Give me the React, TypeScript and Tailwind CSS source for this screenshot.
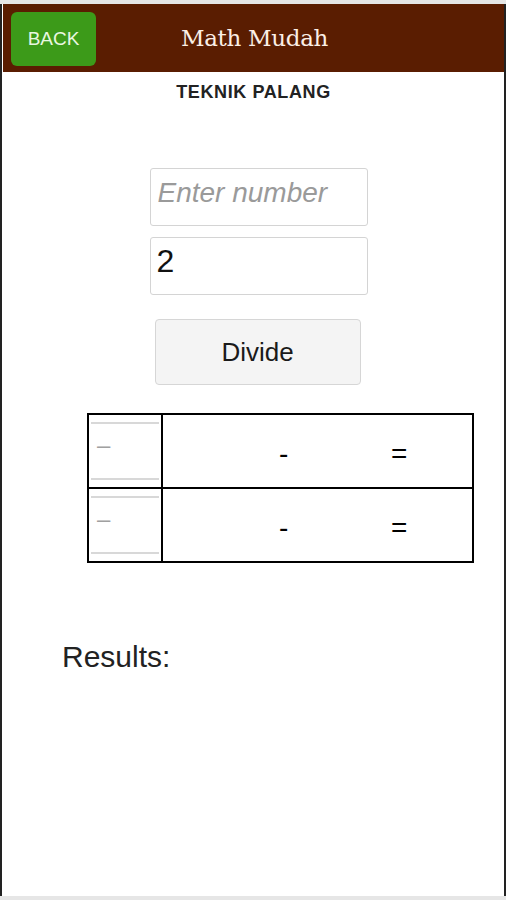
import React, { useState } from 'react';

const App: React.FC = () => {
    const [num, setNum] = useState('');
    const [divisor, setDivisor] = useState('2');

    const rows = [0, 1];

    return (
        <div className="w-[506px] h-[900px] bg-[#e6e6e6] pt-[4px] pb-[4px] pl-[3px] pr-[2px] flex" style={{ fontFamily: '"Liberation Sans", Arial, sans-serif' }}>
            <div className="flex-1 flex flex-col bg-white border-l-[2px] border-r-[2px] border-[#222] -ml-[3px] -mr-[2px] pl-[1px]">
                {/* Header */}
                <div className="h-[68px] bg-[#5a1d01] flex items-center relative shrink-0">
                    <button className="absolute left-[8px] top-[8px] w-[85px] h-[54px] bg-[#3c9a19] rounded-[6px] text-[#e9f7e0] text-[19px]">
                        BACK
                    </button>
                    <h1 className="w-full text-center text-[#fbefe6] text-[23px] pl-[2px] tracking-[-0.3px]" style={{ fontFamily: '"DejaVu Serif", serif' }}>
                        Math Mudah
                    </h1>
                </div>

                <div className="text-center font-bold text-[18px] text-[#222] mt-[7px] tracking-[0.6px]">TEKNIK PALANG</div>

                {/* Inputs */}
                <div className="flex flex-col items-center mt-[62px] gap-[11px] pl-[10px]">
                    <input
                        value={num}
                        onChange={(e) => setNum(e.target.value)}
                        placeholder="Enter number"
                        className="w-[218px] h-[58px] border border-[#d4d4d4] rounded-[3px] px-[7px] pb-[8px] text-[28px] placeholder:italic placeholder:text-[#9a9a9a] outline-none"
                    />
                    <input
                        value={divisor}
                        onChange={(e) => setDivisor(e.target.value)}
                        className="w-[218px] h-[58px] border border-[#d4d4d4] rounded-[3px] px-[6px] pb-[10px] text-[32px] text-[#111] outline-none"
                    />
                    <button className="mt-[13px] -ml-[2px] w-[206px] h-[66px] bg-[#f4f4f4] border border-[#d6d6d6] rounded-[4px] text-[26px] text-[#1a1a1a]">
                        Divide
                    </button>
                </div>

                {/* Table */}
                <div className="ml-[84px] mt-[28px] w-[387px] border-[2px] border-black border-b-0">
                    {rows.map((r) => (
                        <div key={r} className="flex h-[74px] border-b-[2px] border-black">
                            <div className="w-[74px] border-r-[2px] border-black flex flex-col justify-center px-[2px]">
                                <div className="h-[58px] border-t-[2px] border-b-[2px] border-[#d8d8d8] flex items-center pl-[6px] pb-[12px] text-[#a0a0a0] text-[24px]">
                                    –
                                </div>
                            </div>
                            <div className="flex-1 relative text-[28px] text-black">
                                <span className="absolute left-[116px] top-[18px]">-</span>
                                <span className="absolute left-[228px] top-[18px]">=</span>
                            </div>
                        </div>
                    ))}
                </div>

                <div className="ml-[59px] mt-[71px] text-[30px] text-[#222]">Results:</div>
            </div>
        </div>
    );
};

export default App;
